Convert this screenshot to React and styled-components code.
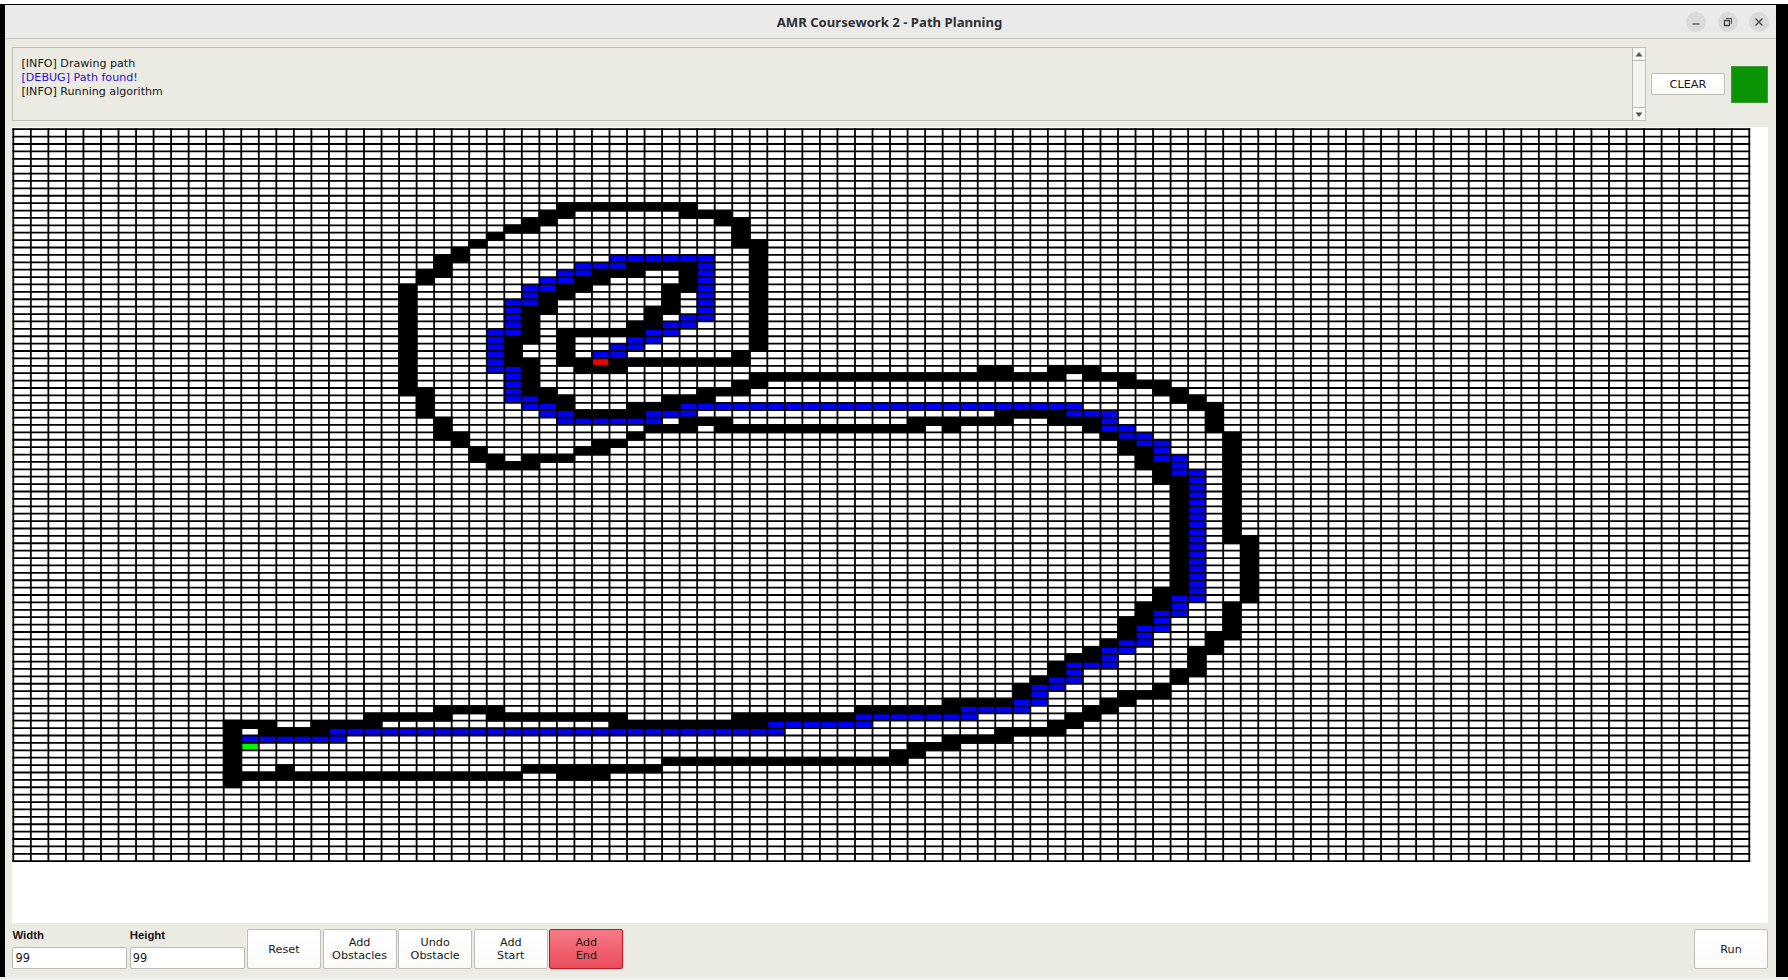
import React from "react";
import styled, { createGlobalStyle } from "styled-components";

const Global = createGlobalStyle`
  html, body { margin: 0; padding: 0; }
  body { background: #fdfdfd; overflow: hidden; }
  * { box-sizing: border-box; }
`;

/* [row, firstCol, lastCol] */
const WALLS = [
  [10,31,38],[11,30,31],[11,38,40],[12,29,30],[12,40,41],[13,28,29],[13,41,41],[14,27,27],[14,41,41],
  [15,26,26],[15,41,41],[16,25,25],[17,24,25],[18,24,24],[19,23,24],[20,23,23],
  [18,35,38],[19,33,35],[19,38,38],[20,32,33],[20,38,38],[21,31,32],[21,37,38],[22,30,31],[22,37,37],
  [23,30,30],[23,37,37],[24,29,30],[24,36,37],[25,29,29],[25,36,36],[26,29,29],[26,35,36],[27,29,29],[27,31,35],
  [28,28,29],[29,28,28],[30,28,28],[31,28,29],[32,29,29],[33,29,29],[34,29,29],[35,29,30],[36,30,31],[37,31,31],
  [30,41,41],[31,32,32],[31,34,41],[32,32,34],
  [32,55,56],[32,59,61],[33,42,59],[33,61,63],[34,41,42],[34,63,65],[35,39,41],[35,65,66],[36,37,39],[36,66,67],
  [37,35,37],[37,67,68],[38,32,35],[38,56,59],[39,38,40],[39,51,56],[39,59,61],[40,36,38],[40,40,51],[40,53,53],
  [40,61,61],[41,35,35],[41,62,62],[41,25,25],[42,25,25],[42,33,34],[43,26,26],[43,32,33],[44,26,27],[44,29,31],[45,27,29],
  [69,62,62],[70,61,61],[71,60,61],[72,59,59],[73,59,59],[74,58,58],[75,57,57],[76,57,57],
  [76,63,65],[75,65,65],[77,53,56],[77,62,63],[78,61,62],[79,60,61],[80,59,60],[81,56,59],[82,53,56],
  [78,24,27],[78,48,53],[79,20,24],[79,27,34],[79,41,47],[80,12,14],[80,17,20],[80,34,42],[81,14,17],
  [83,51,53],[84,50,51],[85,37,50],[86,15,15],[86,29,36],[87,12,28],[87,31,33],
];

/* [col, firstRow, lastRow] */
const WALL_COLUMNS = [
  [22,21,35],[23,35,38],[24,39,41],[42,15,29],[31,27,31],[68,38,40],[69,41,55],[70,55,63],[69,64,68],
  [68,68,70],[67,70,73],[66,73,74],[63,42,43],[64,43,45],[65,45,47],[66,47,62],[65,62,64],[64,64,66],[63,66,68],[12,80,88],
];

const PATH = [
  [17,34,39],[18,32,34],[18,39,39],[19,31,32],[19,39,39],[20,30,31],[20,39,39],[21,29,30],[21,39,39],[22,29,29],
  [22,39,39],[23,28,29],[23,39,39],[24,28,28],[24,39,39],[25,28,28],[25,38,39],[26,28,28],[26,37,38],[27,27,28],
  [27,36,37],[28,27,27],[28,35,36],[29,27,27],[29,34,35],[30,27,27],[30,33,34],[31,27,27],[32,27,28],[33,28,28],
  [34,28,28],[35,28,28],[36,28,29],[37,29,30],[37,38,60],[38,30,31],[38,36,38],[38,60,62],[39,31,36],[39,62,62],
  [40,62,63],[41,63,64],[42,64,65],[43,65,65],[44,65,66],[45,66,66],[46,66,67],[63,66,66],[64,66,66],[65,65,66],
  [66,65,65],[67,64,65],[68,64,64],[69,63,64],[70,62,63],[71,62,62],[72,60,62],[73,60,60],[74,59,60],[75,58,59],
  [76,58,58],[77,57,58],[78,54,57],[79,48,54],[80,43,48],[81,18,43],[82,13,18],
];
const PATH_COLUMNS = [[67,47,63]];

const COUNT = 99;
const CW = 17.535;
const CH = 7.394;
const SPAN = Array.from({ length: COUNT + 1 }, (_, i) => i);

const Desktop = styled.div`
  width: 1788px;
  height: 980px;
  padding-top: 4px;
  display: flex;
  flex-direction: column;
  background: #fdfdfd;
  font-family: "DejaVu Sans", sans-serif;
  color: #141414;
`;
const Screen = styled.div`
  height: 973px;
  padding: 1px 12px 0 5px;
  background: #000;
`;
const Window = styled.main`
  height: 972px;
  display: flex;
  flex-direction: column;
  background: #ebebe4;
`;
const Shelf = styled.div`
  height: 3px;
  background: #efefef;
`;
const TitleBar = styled.header`
  height: 34px;
  display: grid;
  grid-template-columns: 1fr auto 1fr;
  align-items: center;
  background: #eaeaea;
  border-bottom: 1px solid #c4c4c2;
`;
const Title = styled.h1`
  grid-column: 2;
  margin: 0;
  padding: 1px 2px 0 0;
  font: 700 13.15px/18px "Noto Sans", sans-serif;
  color: #303030;
  white-space: nowrap;
`;
const WindowControls = styled.div`
  display: flex;
  justify-content: flex-end;
  gap: 11.3px;
  padding-right: 7px;
`;
const RoundButton = styled.button`
  width: 20px;
  height: 20px;
  padding: 0;
  border: 0;
  border-radius: 50%;
  background: #dadada;
  display: grid;
  place-items: center;
`;
const LogRow = styled.section`
  height: 88px;
  padding: 8px 8px 0 7px;
  display: flex;
`;
const LogBox = styled.div`
  width: 1634px;
  flex: none;
  height: 74px;
  display: flex;
  border: 1px solid #c0c1ba;
`;
const LogText = styled.div`
  flex: 1;
  padding: 9px 8.5px;
`;
const LogLine = styled.p`
  margin: 0;
  font-size: 11.1px;
  line-height: 14px;
  color: ${(p) => (p.$debug ? "#2a0fd0" : "#161616")};
`;
const ScrollBar = styled.div`
  width: 13px;
  display: flex;
  flex-direction: column;
  justify-content: space-between;
  border-left: 1px solid #b9bab3;
  background: #f4f4ef;
`;
const ScrollButton = styled.div`
  height: 13px;
  display: grid;
  place-items: center;
  background: #f8f8f5;
  border: 0 solid #b9bab3;
  border-width: ${(p) => (p.$down ? "1px 0 0" : "0 0 1px")};
`;
const PushButton = styled.button`
  width: 74px;
  height: ${(p) => (p.$small ? 22 : 40)}px;
  padding: 0;
  border: 1px solid ${(p) => (p.$active ? "#c5121f" : "#bebfb8")};
  border-radius: 2px;
  background: ${(p) => (p.$active ? "linear-gradient(#f67a86, #ea4c5b)" : "linear-gradient(#fff, #fafaf8)")};
  color: #1a1a1a;
  font: 11.2px/13px "DejaVu Sans", sans-serif;
  white-space: pre-line;
`;
const ClearButton = styled(PushButton)`
  margin: 26px 6px 0 5px;
  font-size: 11.3px;
`;
const Status = styled.div`
  width: 37px;
  height: 37px;
  margin-top: 18.5px;
  background: #0a9405;
  border: 1px solid #3c9c33;
`;
const Canvas = styled.section`
  height: 796px;
  margin: 0 8px 0 7px;
  background: #fff;
`;
const GridDrawing = styled.svg`
  display: block;
`;
const Toolbar = styled.footer`
  padding: 6px 8px 0 7.4px;
  display: flex;
`;
const Field = styled.label`
  width: 115px;
  margin-right: 2.3px;
  display: flex;
  flex-direction: column;
  font: 700 11.4px/13px "Liberation Sans", sans-serif;
`;
const Input = styled.input`
  width: 115px;
  height: 22px;
  margin-top: 5px;
  padding: 0 2px;
  border: 1px solid #b9bab3;
  border-radius: 2px;
  background: #fff;
  color: #1a1a1a;
  font: 11.4px "DejaVu Sans", sans-serif;
`;
const Buttons = styled.div`
  flex: 1;
  display: flex;
  gap: 1.6px;
`;

const Cells = ({ runs, vertical, fill }) =>
  runs.map(([line, from, to]) => {
    const len = to - from + 1;
    return (
      <rect
        key={`${line}-${from}`}
        x={(vertical ? line : from) * CW}
        y={(vertical ? from : line) * CH}
        width={(vertical ? 1 : len) * CW}
        height={(vertical ? len : 1) * CH}
        fill={fill}
        stroke={fill === "#000" ? "#000" : "none"}
        strokeWidth="1.8"
      />
    );
  });

const GridMap = () => (
  <GridDrawing width="1755" height="740" viewBox="-1.3 -2.2 1755 740">
    <Cells runs={PATH} fill="#0000f5" />
    <Cells runs={PATH_COLUMNS} vertical fill="#0000f5" />
    <Cells runs={[[31, 33, 33]]} fill="#ee0000" />
    <Cells runs={[[83, 13, 13]]} fill="#00f500" />
    <g stroke="#000" strokeWidth="1.8">
      {SPAN.map((i) => (
        <line key={`c${i}`} x1={i * CW} x2={i * CW} y1={-0.9} y2={COUNT * CH + 0.9} />
      ))}
      {SPAN.map((i) => (
        <line key={`r${i}`} y1={i * CH} y2={i * CH} x1={-0.9} x2={COUNT * CW + 0.9} />
      ))}
    </g>
    <Cells runs={WALLS} fill="#000" />
    <Cells runs={WALL_COLUMNS} vertical fill="#000" />
  </GridDrawing>
);

export default function App() {
  return (
    <>
      <Global />
      <Desktop>
        <Screen>
          <Window>
            <TitleBar>
              <Title>AMR Coursework 2 - Path Planning</Title>
              <WindowControls>
                <RoundButton aria-label="Minimize">
                  <svg width="10" height="10"><path d="M1.5 7H8.5" stroke="#444" strokeWidth="1.2" /></svg>
                </RoundButton>
                <RoundButton aria-label="Restore">
                  <svg width="10" height="10" fill="none" stroke="#444">
                    <path d="M1.5 3.5H6.5V8.5H1.5Z" strokeWidth="1.3" />
                    <path d="M3 1.5H8.5V7" strokeWidth="0.9" />
                  </svg>
                </RoundButton>
                <RoundButton aria-label="Close">
                  <svg width="10" height="10"><path d="M1.5 1.5L8.5 8.5M8.5 1.5L1.5 8.5" stroke="#444" strokeWidth="1.3" /></svg>
                </RoundButton>
              </WindowControls>
            </TitleBar>
            <LogRow>
              <LogBox>
                <LogText>
                  <LogLine>[INFO] Drawing path</LogLine>
                  <LogLine $debug>[DEBUG] Path found!</LogLine>
                  <LogLine>[INFO] Running algorithm</LogLine>
                </LogText>
                <ScrollBar>
                  <ScrollButton><svg width="8" height="5"><path d="M4 0L7.5 4.5H.5Z" fill="#555" /></svg></ScrollButton>
                  <ScrollButton $down><svg width="8" height="5"><path d="M4 5L7.5 .5H.5Z" fill="#555" /></svg></ScrollButton>
                </ScrollBar>
              </LogBox>
              <ClearButton $small>CLEAR</ClearButton>
              <Status />
            </LogRow>
            <Canvas><GridMap /></Canvas>
            <Toolbar>
              <Field>Width<Input defaultValue="99" /></Field>
              <Field>Height<Input defaultValue="99" /></Field>
              <Buttons>
                <PushButton>Reset</PushButton>
                <PushButton>{"Add\nObstacles"}</PushButton>
                <PushButton>{"Undo\nObstacle"}</PushButton>
                <PushButton>{"Add\nStart"}</PushButton>
                <PushButton $active>{"Add\nEnd"}</PushButton>
              </Buttons>
              <PushButton>Run</PushButton>
            </Toolbar>
          </Window>
        </Screen>
        <Shelf />
      </Desktop>
    </>
  );
}
